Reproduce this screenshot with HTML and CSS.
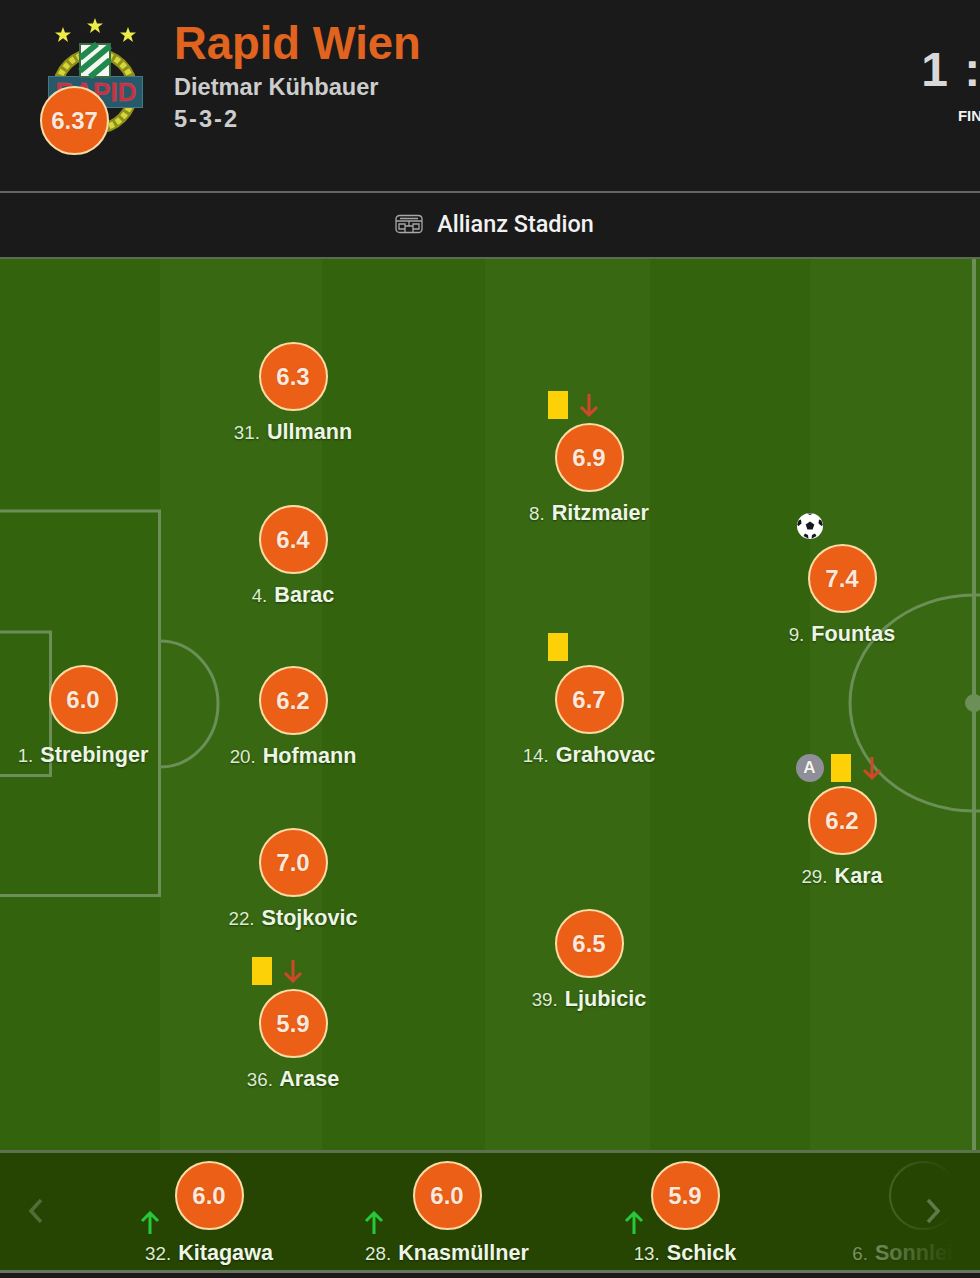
FILE: index.html
```html
<!DOCTYPE html>
<html lang="en">
<head>
<meta charset="utf-8">
<title>Rapid Wien line-up</title>
<link rel="stylesheet" href="styles.css">
</head>
<body>
<div class="app">
  <header class="match-head">
    <div class="team">
      <div class="crest">
        <svg class="crest-svg" viewBox="0 0 110 130" width="110" height="130" aria-hidden="true">
          <g fill="#eeea48">
            <polygon points="23,19 25,24.500 31,24.500 26.300,28 28,34 23,30.300 18,34 19.700,28 15,24.500 21,24.500"/>
            <polygon points="55,10 57,15.500 63,15.500 58.300,19 60,25 55,21.300 50,25 51.700,19 47,15.500 53,15.500"/>
            <polygon points="88,19 90,24.500 96,24.500 91.300,28 93,34 88,30.300 83,34 84.700,28 80,24.500 86,24.500"/>
          </g>
          <circle cx="55" cy="83" r="38" fill="none" stroke="#8f8f1c" stroke-width="10"/>
          <circle cx="55" cy="83" r="38" fill="none" stroke="#d6d63a" stroke-width="6" stroke-dasharray="5 3"/>
          <rect x="8.500" y="68.500" width="94" height="31" fill="#27596a" stroke="#3f7a86"/>
          <text x="56" y="93" class="crest-text" text-anchor="middle">RAPID</text>
          <rect x="40" y="36" width="30" height="33" fill="#f4f6ef" stroke="#3b6a46" stroke-width="2"/>
          <g stroke="#1f8a4c" stroke-width="6">
            <path d="M40 50L57 36M40 63L70 38M50 69L70 52"/>
          </g>
        </svg>
        <div class="rating rating-team">6.37</div>
      </div>
      <div class="team-info">
        <div class="team-name">Rapid Wien</div>
        <div class="team-coach">Dietmar Kühbauer</div>
        <div class="team-shape">5-3-2</div>
      </div>
    </div>
    <div class="score">
      <div class="score-val">1 : 1</div>
      <div class="score-state">FINAL</div>
    </div>
  </header>

  <div class="venue">
    <svg class="venue-icon" viewBox="0 0 28 20" width="28" height="20" aria-hidden="true">
      <path d="M1 5Q1 1.500 5 1.500H23Q27 1.500 27 5V15Q27 18.500 23 18.500H5Q1 18.500 1 15ZM1 7H27M5 4.500H23M4 10H10V15H4ZM18 10H24V15H18ZM10 18V12H18V18M14 7V12" fill="none" stroke="#a8a8a8" stroke-width="1.300"/>
    </svg>
    <span class="venue-name">Allianz Stadion</span>
  </div>

  <main class="pitch">
    <div class="stripes">
      <div class="stripe dark"></div><div class="stripe light"></div><div class="stripe dark"></div><div class="stripe light"></div><div class="stripe dark"></div><div class="stripe light"></div>
    </div>
    <svg class="lines" viewBox="0 0 980 893" width="980" height="893" aria-hidden="true">
      <g fill="none" stroke="#6c8f58" stroke-width="3">
        <path d="M-3 254H159.500V638.500H-3"/>
        <path d="M-3 375H50.500V518.500H-3"/>
        <path d="M160 384A58 63 0 0 1 160 510"/>
        <ellipse cx="974" cy="446" rx="124" ry="108"/>
      </g>
      <rect x="972" y="0" width="4" height="893" fill="#6c8f58"/>
      <circle cx="974" cy="446" r="9" fill="#6c8f58"/>
    </svg>

    <div class="tok" style="left:-17px;top:408px"><div class="rating">6.0</div><div class="name"><span class="num">1.</span> Strebinger</div></div>

    <div class="tok" style="left:193px;top:85px"><div class="rating">6.3</div><div class="name"><span class="num">31.</span> Ullmann</div></div>
    <div class="tok" style="left:193px;top:248px"><div class="rating">6.4</div><div class="name"><span class="num">4.</span> Barac</div></div>
    <div class="tok" style="left:193px;top:409px"><div class="rating">6.2</div><div class="name"><span class="num">20.</span> Hofmann</div></div>
    <div class="tok" style="left:193px;top:571px"><div class="rating">7.0</div><div class="name"><span class="num">22.</span> Stojkovic</div></div>
    <div class="tok" style="left:193px;top:732px">
      <div class="rating">5.9<i class="card"></i><svg class="sub-off" viewBox="0 0 20 24"><path d="M10 1V22M2 14L10 22L18 14"/></svg></div>
      <div class="name"><span class="num">36.</span> Arase</div>
    </div>

    <div class="tok" style="left:489px;top:166px">
      <div class="rating">6.9<i class="card"></i><svg class="sub-off" viewBox="0 0 20 24"><path d="M10 1V22M2 14L10 22L18 14"/></svg></div>
      <div class="name"><span class="num">8.</span> Ritzmaier</div>
    </div>
    <div class="tok" style="left:489px;top:408px">
      <div class="rating">6.7<i class="card"></i></div>
      <div class="name"><span class="num">14.</span> Grahovac</div>
    </div>
    <div class="tok" style="left:489px;top:652px"><div class="rating">6.5</div><div class="name"><span class="num">39.</span> Ljubicic</div></div>

    <div class="tok" style="left:742px;top:287px">
      <div class="rating">7.4
        <svg class="ball" viewBox="0 0 26 26">
          <circle cx="13" cy="13" r="13" fill="#fff"/>
          <polygon points="13,8.500 17.300,11.600 15.600,16.600 10.400,16.600 8.700,11.600" fill="#161625"/>
          <path d="M10 .5L13 2L16 .5ZM1.500 7.500L4 6.500L4.500 10.500L1.500 13L.2 12ZM24.500 7.500L22 6.500L21.500 10.500L24.500 13L25.800 12ZM6.500 23L8 20.500L11 22L11.500 25.800ZM19.500 23L18 20.500L15 22L14.500 25.800Z" fill="#161625"/>
        </svg>
      </div>
      <div class="name"><span class="num">9.</span> Fountas</div>
    </div>
    <div class="tok" style="left:742px;top:529px">
      <div class="rating">6.2<b class="captain">A</b><i class="card card-mid"></i><svg class="sub-off sub-far" viewBox="0 0 20 24"><path d="M10 1V22M2 14L10 22L18 14"/></svg></div>
      <div class="name"><span class="num">29.</span> Kara</div>
    </div>
  </main>

  <section class="bench">
    <svg class="chev chev-l" viewBox="0 0 14 26" aria-hidden="true"><path d="M12 2L2 13L12 24"/></svg>
    <div class="bench-item">
      <div class="rating">6.0</div>
      <svg class="sub-on" style="left:50px" viewBox="0 0 20 24"><path d="M10 23V2M2 10L10 2L18 10"/></svg>
      <div class="name"><span class="num">32.</span> Kitagawa</div>
    </div>
    <div class="bench-item">
      <div class="rating">6.0</div>
      <svg class="sub-on" style="left:36px" viewBox="0 0 20 24"><path d="M10 23V2M2 10L10 2L18 10"/></svg>
      <div class="name"><span class="num">28.</span> Knasmüllner</div>
    </div>
    <div class="bench-item">
      <div class="rating">5.9</div>
      <svg class="sub-on" style="left:58px" viewBox="0 0 20 24"><path d="M10 23V2M2 10L10 2L18 10"/></svg>
      <div class="name"><span class="num">13.</span> Schick</div>
    </div>
    <div class="bench-item bench-ghost">
      <div class="rating rating-empty"></div>
      <div class="name"><span class="num">6.</span> Sonnleitner</div>
    </div>
    <div class="fade"></div>
    <svg class="chev chev-r" viewBox="0 0 14 26" aria-hidden="true"><path d="M2 2L12 13L2 24"/></svg>
  </section>
  <div class="foot"></div>
</div>
</body>
</html>
```
FILE: styles.css
```css
* { box-sizing: border-box; }
html, body { margin: 0; padding: 0; background: #1a1a1a; }
body { width: 980px; height: 1278px; overflow: hidden; font-family: "Liberation Sans", Arial, sans-serif; }
.app { width: 980px; height: 1278px; overflow: hidden; display: flex; flex-direction: column; }

.match-head {
  flex: none;
  width: 1960px;
  height: 193px;
  display: grid;
  grid-template-columns: 1fr auto 1fr;
  background: #1a1a1a;
  border-bottom: 2px solid #646464;
}
.team { display: flex; padding-left: 40px; }
.crest { position: relative; width: 134px; height: 160px; }
.crest-svg { position: absolute; left: 0; top: 8px; }
.crest-text { font: bold 26px "Liberation Sans", Arial, sans-serif; fill: #c9303f; stroke: #a8606a; stroke-width: .4px; }
.rating-team { position: absolute; left: 0; top: 86px; }
.team-info { color: #cdcdcd; font-weight: bold; padding-top: 18px; }
.team-name { font-size: 45.400px; line-height: 52px; color: #e0641f; }
.team-coach { font-size: 23.600px; line-height: 32px; margin-top: 1px; }
.team-shape { font-size: 23.600px; line-height: 32px; letter-spacing: 2px; }

.score { text-align: center; padding-top: 40px; color: #d8d8d8; font-weight: bold; }
.score-val { font-size: 48px; line-height: 60px; white-space: pre; transform: translateX(-7px); letter-spacing: 1.500px; }
.score-state { font-size: 15px; line-height: 20px; margin-top: 6px; color: #f0f0f0; }

.venue {
  flex: none;
  height: 64px;
  display: flex;
  align-items: center;
  justify-content: center;
  gap: 14px;
  padding: 0 0 3px 9px;
  background: #1a1a1a;
}
.venue-name { font-family: Roboto, "Liberation Sans", sans-serif; font-weight: 500; font-size: 23.400px; color: #f2f2f2; }

.pitch {
  position: relative;
  flex: none;
  height: 893px;
  overflow: hidden;
}
.pitch::after { content: ""; position: absolute; left: 0; right: 0; top: 0; height: 2px; background: #5a6d50; }
.stripes { position: absolute; inset: 0; display: grid; grid-template-columns: 160px 162px 163px 165px 160px 170px; }
.dark { background: #34630e; }
.light { background: #386811; }
.lines { position: absolute; left: 0; top: 0; }

.tok { position: absolute; width: 200px; display: flex; flex-direction: column; align-items: center; }
.rating {
  position: relative;
  flex: none;
  width: 69px;
  height: 69px;
  display: flex;
  align-items: center;
  justify-content: center;
  border-radius: 50%;
  background: #ec5f17;
  border: 2px solid #fbdca5;
  color: #fde8dc;
  font-weight: bold;
  font-size: 24px;
  text-shadow: 0 0 1px rgba(120,50,10,.5);
}
.name {
  margin-top: 8px;
  font-weight: bold;
  font-size: 21.600px;
  line-height: 26px;
  color: #edf6e6;
  white-space: nowrap;
  text-shadow: 0 1px 2px rgba(0,0,0,.45);
}
.num { font-weight: normal; font-size: 18.800px; color: #dcebd2; margin-right: 1px; }

.card { position: absolute; left: -9px; top: -34px; width: 20px; height: 28px; background: #fdd108; }
.card-mid { left: 21px; }
.sub-off { position: absolute; left: 22px; top: -32px; width: 20px; height: 24px; fill: none; stroke: #d0482a; stroke-width: 3; }
.sub-far { left: 52px; }
.ball { position: absolute; left: -13px; top: -33px; width: 26px; height: 26px; }
.captain {
  position: absolute;
  left: -14px;
  top: -34px;
  width: 28px;
  height: 28px;
  border-radius: 50%;
  background: #8e8f98;
  color: #f4f4f4;
  font-size: 17px;
  font-weight: bold;
  line-height: 28px;
  text-align: center;
}

.bench {
  position: relative;
  flex: none;
  height: 120px;
  display: flex;
  padding: 8px 0 0 90px;
  background: #274502;
  border-top: 3px solid #5b7150;
}
.bench-item { position: relative; flex: none; width: 238px; display: flex; flex-direction: column; align-items: center; }
.bench-item .name { margin-top: 10px; }
.sub-on { position: absolute; top: 50px; width: 20px; height: 24px; fill: none; stroke: #25c93a; stroke-width: 3; }
.bench-ghost { opacity: .45; }
.rating-empty { background: transparent; border-color: #8aa07a; }
.fade { position: absolute; left: 860px; top: 0; bottom: 0; width: 120px; background: linear-gradient(to right, rgba(39,69,2,0), #274502 78%); }
.chev { position: absolute; top: 45px; width: 14px; height: 26px; fill: none; stroke-width: 3.500; }
.chev-l { left: 29px; stroke: #4f6e38; }
.chev-r { left: 926px; stroke: #5f7a48; }

.foot { flex: 1; background: #1a1a1a; border-top: 3px solid #66755d; }
```
